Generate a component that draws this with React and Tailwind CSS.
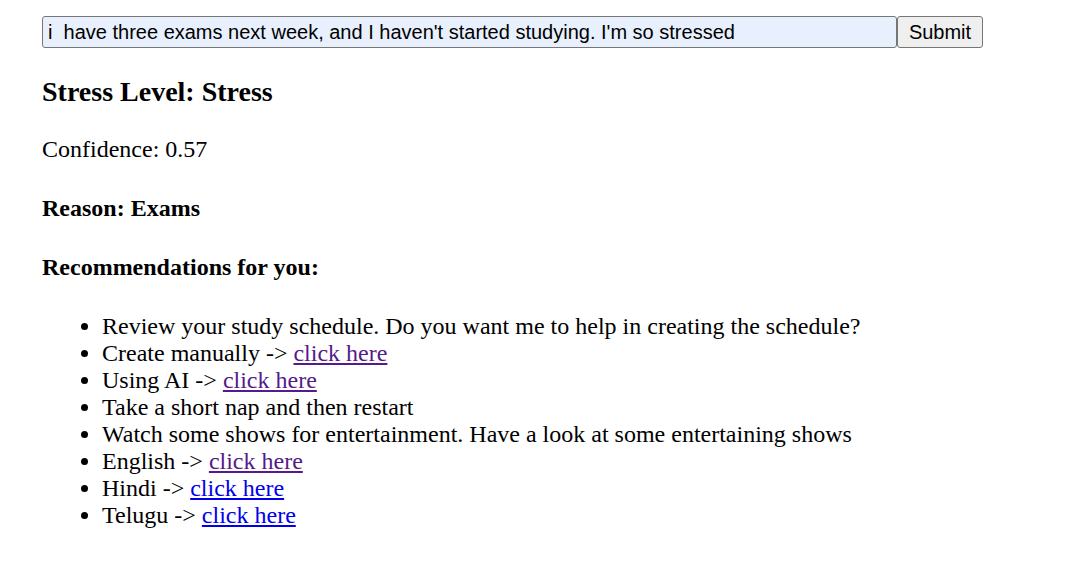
export default function App() {
  const serif = { fontFamily: '"Liberation Serif", "Times New Roman", serif' };

  return (
    <div className="min-h-screen bg-white pl-[42px] pr-3 pt-[16px] text-black text-[24px] leading-[normal] font-['Liberation_Serif',serif]">
      {/* Input form */}
      <form className="flex items-stretch" onSubmit={(e) => e.preventDefault()}>
        <input
          type="text"
          defaultValue="i  have three exams next week, and I haven't started studying. I'm so stressed"
          className="w-[855px] h-[32px] bg-[#e8f0fe] border border-[#767676] rounded-[3px] px-[5px] text-[20px] text-black font-['Liberation_Sans',Arial,sans-serif] outline-none"
        />
        <button
          type="submit"
          className="w-[86px] h-[32px] bg-[#efefef] border border-[#767676] rounded-[3px] text-[20px] text-black font-['Liberation_Sans',Arial,sans-serif]"
        >
          Submit
        </button>
      </form>

      {/* Result */}
      <h3 className="mt-[28px] mb-[28px] text-[28px] font-bold leading-[normal]">
        Stress Level: Stress
      </h3>
      <p className="mb-[32px]">Confidence: 0.57</p>
      <h4 className="mb-[32px] font-bold">Reason: Exams</h4>
      <h4 className="mb-[32px] font-bold">Recommendations for you:</h4>

      <ul className="list-disc pl-[60px]" style={serif}>
        <li>Review your study schedule. Do you want me to help in creating the schedule?</li>
        <li>
          Create manually -&gt;{" "}
          <a href="#" className="text-[#551a8b] underline">click here</a>
        </li>
        <li>
          Using AI -&gt;{" "}
          <a href="#" className="text-[#551a8b] underline">click here</a>
        </li>
        <li>Take a short nap and then restart</li>
        <li>Watch some shows for entertainment. Have a look at some entertaining shows</li>
        <li>
          English -&gt;{" "}
          <a href="#" className="text-[#551a8b] underline">click here</a>
        </li>
        <li>
          Hindi -&gt;{" "}
          <a href="#" className="text-[#0000ee] underline">click here</a>
        </li>
        <li>
          Telugu -&gt;{" "}
          <a href="#" className="text-[#0000ee] underline">click here</a>
        </li>
      </ul>
    </div>
  );
}
